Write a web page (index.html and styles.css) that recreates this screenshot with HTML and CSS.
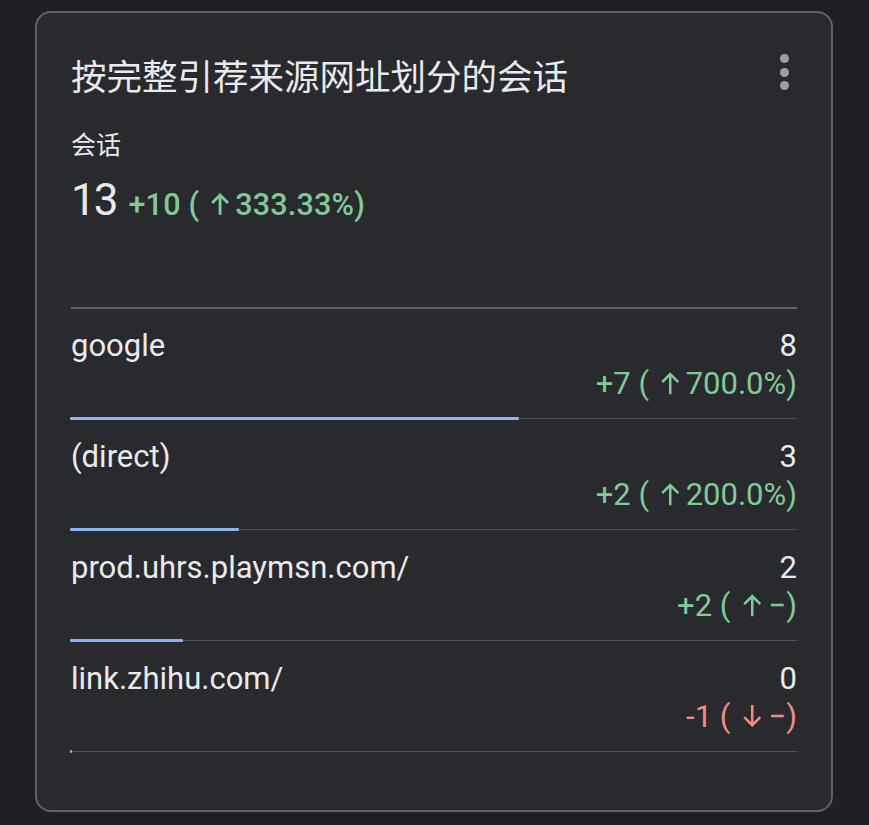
FILE: index.html
```html
<!DOCTYPE html>
<html lang="zh-CN">
<head>
<meta charset="utf-8">
<title>按完整引荐来源网址划分的会话</title>
<link rel="stylesheet" href="styles.css">
</head>
<body>
<div class="page">
  <section class="card">
    <header class="card-head">
      <h1 class="title">按完整引荐来源网址划分的会话</h1>
      <button class="kebab" aria-label="更多">
        <span class="dot"></span><span class="dot"></span><span class="dot"></span>
      </button>
    </header>
    <div class="metric-label">会话</div>
    <div class="metric">
      <span class="metric-value">13</span>
      <span class="delta up strong">+10 (<svg class="arrow" viewBox="0 0 20 24"><path d="M10 23V3M2 11l8-8 8 8"/></svg>333.33%)</span>
    </div>
    <div class="divider"></div>
    <ul class="rows">
      <li class="row">
        <div class="row-main">
          <span class="name">google</span>
          <div class="nums">
            <span class="num">8</span>
            <span class="delta up">+7 (<svg class="arrow" viewBox="0 0 20 24"><path d="M10 23V3M2 11l8-8 8 8"/></svg>700.0%)</span>
          </div>
        </div>
        <div class="bar"><div class="fill" style="width:449px"></div><div class="track"></div></div>
      </li>
      <li class="row">
        <div class="row-main">
          <span class="name">(direct)</span>
          <div class="nums">
            <span class="num">3</span>
            <span class="delta up">+2 (<svg class="arrow" viewBox="0 0 20 24"><path d="M10 23V3M2 11l8-8 8 8"/></svg>200.0%)</span>
          </div>
        </div>
        <div class="bar"><div class="fill" style="width:169px"></div><div class="track"></div></div>
      </li>
      <li class="row">
        <div class="row-main">
          <span class="name">prod.uhrs.playmsn.com/</span>
          <div class="nums">
            <span class="num">2</span>
            <span class="delta up">+2 (<svg class="arrow" viewBox="0 0 20 24"><path d="M10 23V3M2 11l8-8 8 8"/></svg><span class="dash">−</span>)</span>
          </div>
        </div>
        <div class="bar"><div class="fill" style="width:113px"></div><div class="track"></div></div>
      </li>
      <li class="row">
        <div class="row-main">
          <span class="name">link.zhihu.com/</span>
          <div class="nums">
            <span class="num">0</span>
            <span class="delta down">-1 (<svg class="arrow" viewBox="0 0 20 24"><path d="M10 1v20M2 13l8 8 8-8"/></svg><span class="dash">−</span>)</span>
          </div>
        </div>
        <div class="bar"><div class="fill" style="width:2px"></div><div class="track"></div></div>
      </li>
    </ul>
  </section>
</div>
</body>
</html>
```
FILE: styles.css
```css
* { box-sizing: border-box; }
html, body {
  margin: 0;
  padding: 0;
  background: #1f2023;
}
body {
  font-family: Roboto, "Noto Sans CJK SC", sans-serif;
  color: #e8eaed;
}
.page {
  padding: 11px 0 0 35px;
  height: 825px;
}
.card {
  width: 798px;
  height: 801px;
  background: #292a2e;
  border: 2px solid #5f6368;
  border-radius: 16px;
  padding: 40px 34px 0 34px;
}
.card-head {
  display: flex;
  justify-content: space-between;
  align-items: flex-start;
}
.title {
  margin: 0;
  font-family: "Noto Sans CJK SC", sans-serif;
  font-weight: 400;
  font-size: 35.5px;
  line-height: 44px;
  color: #e8eaed;
}
.kebab {
  background: none;
  border: 0;
  padding: 0;
  margin: 1px 8px 0 0;
  display: flex;
  flex-direction: column;
  gap: 4.5px;
  cursor: pointer;
}
.dot {
  width: 9px;
  height: 9px;
  border-radius: 50%;
  background: #9aa0a6;
}
.metric-label {
  margin-top: 31px;
  font-family: "Noto Sans CJK SC", sans-serif;
  font-size: 25px;
  line-height: 30px;
}
.metric {
  margin-top: 17px;
  display: flex;
  align-items: baseline;
  gap: 12px;
  height: 50px;
  line-height: 50px;
}
.metric-value {
  font-size: 44px;
  font-weight: 400;
  letter-spacing: -2px;
  color: #e8eaed;
}
.metric .delta {
  font-size: 30.5px;
  letter-spacing: 0.2px;
}
.delta.strong { font-weight: 500; }
.delta.up { color: #81c995; }
.delta.down { color: #f28b82; }
.arrow {
  width: 0.66em;
  height: 0.78em;
  margin: 0 0.16em 0 0.36em;
  fill: none;
  stroke: currentColor;
  stroke-width: 2.5;
  vertical-align: -0.03em;
}
.strong .arrow { stroke-width: 2.9; }
.dash { margin-left: 0.05em; }
.divider {
  margin-top: 82px;
  height: 2px;
  background: #5f6368;
}
.rows {
  list-style: none;
  margin: 0;
  padding: 0;
}
.row {
  height: 111px;
  padding-top: 18px;
  display: flex;
  flex-direction: column;
}
.row-main {
  display: flex;
  justify-content: space-between;
  align-items: flex-start;
  height: 76px;
  margin-bottom: 14px;
}
.name {
  font-size: 31px;
  line-height: 38px;
}
.nums {
  display: flex;
  flex-direction: column;
  align-items: flex-end;
  font-size: 31px;
  line-height: 38px;
}
.bar {
  display: flex;
  align-items: center;
  height: 3px;
  margin-left: -1px;
}
.fill {
  height: 3px;
  background: #8ab4f8;
  border-radius: 1px;
  flex: none;
}
.track {
  flex: 1;
  height: 1px;
  background: #4e5054;
}
```
